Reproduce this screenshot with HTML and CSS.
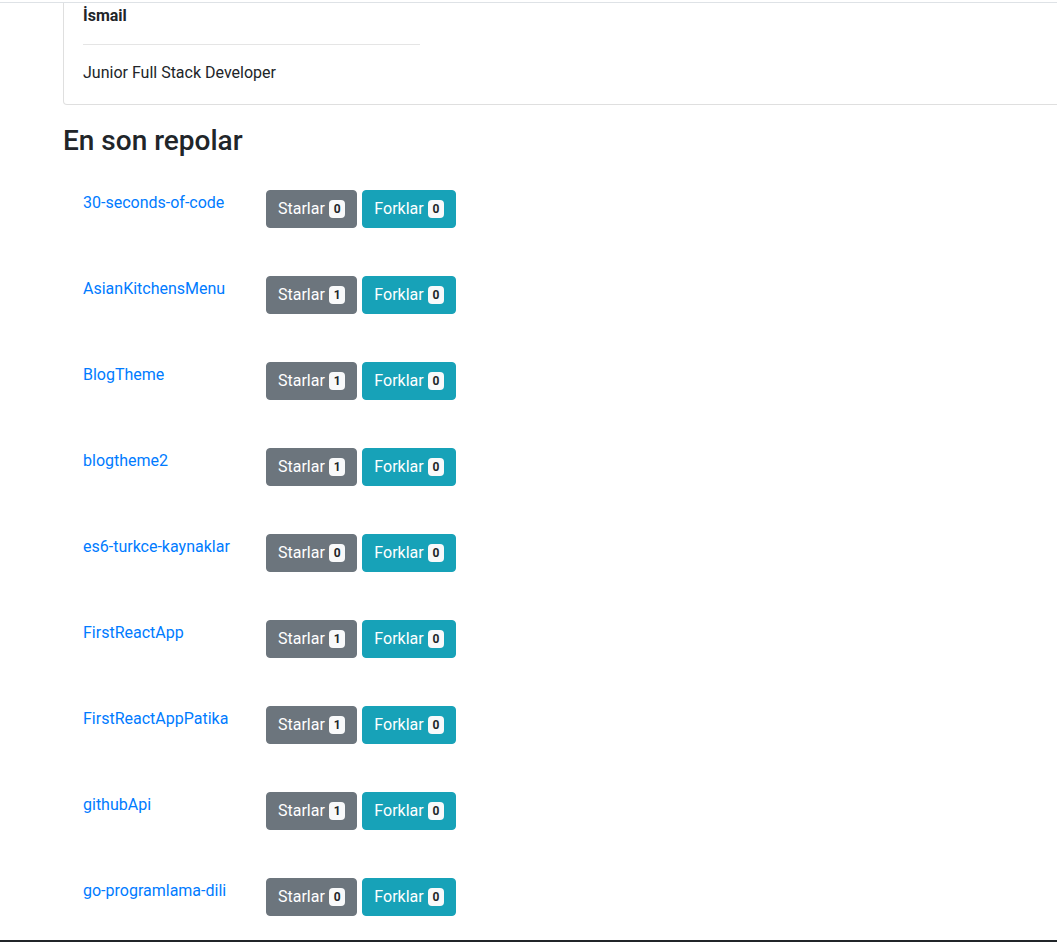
FILE: index.html
```html
<!DOCTYPE html>
<html lang="tr">
<head>
<meta charset="utf-8">
<title>Profil</title>
<link rel="stylesheet" href="styles.css">
</head>
<body>
<div class="topline"></div>
<main class="page">
  <section class="card">
    <div class="profile-info">
      <div class="name">İsmail</div>
      <hr class="divider">
      <p class="bio">Junior Full Stack Developer</p>
    </div>
  </section>

  <h3 class="section-title">En son repolar</h3>

  <ul class="repo-list">
    <li class="repo"><a class="repo-link" href="#">30-seconds-of-code</a><div class="repo-actions"><span class="btn btn-secondary">Starlar <span class="badge">0</span></span><span class="btn btn-info">Forklar <span class="badge">0</span></span></div></li>
    <li class="repo"><a class="repo-link" href="#">AsianKitchensMenu</a><div class="repo-actions"><span class="btn btn-secondary">Starlar <span class="badge">1</span></span><span class="btn btn-info">Forklar <span class="badge">0</span></span></div></li>
    <li class="repo"><a class="repo-link" href="#">BlogTheme</a><div class="repo-actions"><span class="btn btn-secondary">Starlar <span class="badge">1</span></span><span class="btn btn-info">Forklar <span class="badge">0</span></span></div></li>
    <li class="repo"><a class="repo-link" href="#">blogtheme2</a><div class="repo-actions"><span class="btn btn-secondary">Starlar <span class="badge">1</span></span><span class="btn btn-info">Forklar <span class="badge">0</span></span></div></li>
    <li class="repo"><a class="repo-link" href="#">es6-turkce-kaynaklar</a><div class="repo-actions"><span class="btn btn-secondary">Starlar <span class="badge">0</span></span><span class="btn btn-info">Forklar <span class="badge">0</span></span></div></li>
    <li class="repo"><a class="repo-link" href="#">FirstReactApp</a><div class="repo-actions"><span class="btn btn-secondary">Starlar <span class="badge">1</span></span><span class="btn btn-info">Forklar <span class="badge">0</span></span></div></li>
    <li class="repo"><a class="repo-link" href="#">FirstReactAppPatika</a><div class="repo-actions"><span class="btn btn-secondary">Starlar <span class="badge">1</span></span><span class="btn btn-info">Forklar <span class="badge">0</span></span></div></li>
    <li class="repo"><a class="repo-link" href="#">githubApi</a><div class="repo-actions"><span class="btn btn-secondary">Starlar <span class="badge">1</span></span><span class="btn btn-info">Forklar <span class="badge">0</span></span></div></li>
    <li class="repo"><a class="repo-link" href="#">go-programlama-dili</a><div class="repo-actions"><span class="btn btn-secondary">Starlar <span class="badge">0</span></span><span class="btn btn-info">Forklar <span class="badge">0</span></span></div></li>
  </ul>
</main>
<footer class="footer"></footer>
</body>
</html>
```
FILE: styles.css
```css
html, body {
  margin: 0;
  padding: 0;
  overflow: hidden;
}
body {
  font-family: Roboto, "Liberation Sans", sans-serif;
  font-size: 16px;
  line-height: 1.5;
  color: #212529;
  background: #fff;
}
.topline {
  height: 2px;
  border-bottom: 1px solid #dee2e6;
}
.page {
  padding-left: 63px;
}
.card {
  border-left: 1px solid rgba(0,0,0,.125);
  border-bottom: 1px solid rgba(0,0,0,.125);
  border-bottom-left-radius: 4px;
  padding: 1px 19px 19px 19px;
}
.profile-info {
  width: 337px;
}
.name {
  font-weight: 700;
}
.divider {
  margin: 16px 0 16px 0;
  border: 0;
  border-top: 1px solid rgba(0,0,0,.1);
  height: 0;
}
.bio {
  margin: 0;
}
.section-title {
  font-size: 28px;
  font-weight: 500;
  line-height: 1.2;
  margin: 19px 0 8px 0;
}
.repo-list {
  list-style: none;
  margin: 0;
  padding: 0;
}
.repo {
  display: flex;
  align-items: flex-start;
  padding: 24px 20px;
  height: 38px;
}
.repo-link {
  width: 183px;
  padding-top: 1px;
  color: #007bff;
  text-decoration: none;
}
.repo-actions {
  display: flex;
  gap: 5px;
}
.btn {
  display: inline-block;
  padding: 6px 11px;
  font-size: 16px;
  line-height: 24px;
  border: 1px solid transparent;
  border-radius: 4px;
  color: #fff;
  white-space: nowrap;
}
.btn-secondary {
  background: #6c757d;
  border-color: #6c757d;
}
.btn-info {
  background: #17a2b8;
  border-color: #17a2b8;
}
.badge {
  display: inline-block;
  position: relative;
  top: -1px;
  padding: .25em .4em;
  font-size: 75%;
  font-weight: 700;
  line-height: 1;
  vertical-align: baseline;
  border-radius: 4px;
  background: #f8f9fa;
  color: #212529;
}
.footer {
  background: #212529;
  height: 60px;
}
```
